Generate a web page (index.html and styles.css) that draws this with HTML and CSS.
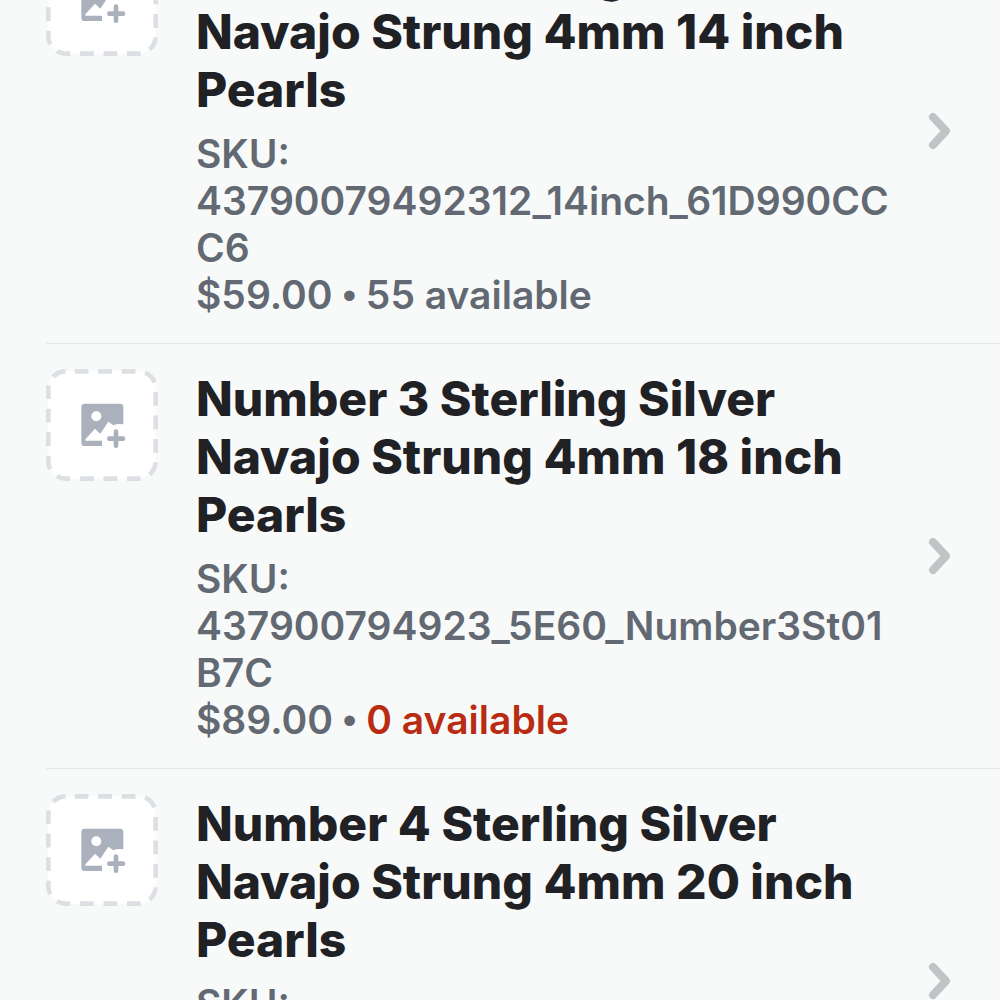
FILE: index.html
```html
<!DOCTYPE html>
<html lang="en">
<head>
  <meta charset="UTF-8">
  <meta name="viewport" content="width=device-width, initial-scale=1.0">
  <title>Variants</title>
  <link rel="stylesheet" href="styles.css">
</head>
<body>

  <!-- shared icons -->
  <svg class="sprite" aria-hidden="true">
    <symbol id="add-image" viewBox="0 0 336 336">
      <rect x="7" y="7" width="322" height="322" rx="52" fill="#fff" stroke="#dcdfe4" stroke-width="14" pathLength="1190" stroke-dasharray="41 29" stroke-dashoffset="-27"/>
      <path fill="#aab1bd" d="M116 104H222Q232 104 232 114V166Q214 163 202 169L187 158L163 194L147 179L118 211V215H168V231H116Q106 231 106 221V114Q106 104 116 104Z"/>
      <circle cx="151" cy="142" r="15" fill="#fff"/>
      <path fill="none" stroke="#aab1bd" stroke-width="14" stroke-linecap="round" d="M190 209H231M210 188V230"/>
    </symbol>
    <symbol id="chevron" viewBox="0 0 24 38">
      <path fill="none" stroke="#c1c3c7" stroke-width="8" stroke-linecap="round" stroke-linejoin="round" d="M5 5L18 19L5 33"/>
    </symbol>
  </svg>

  <main>
    <ul class="variants">
      <li>
        <a class="variant" href="#">
          <svg class="thumb" role="img" aria-label="Add image"><use href="#add-image"/></svg>
          <div class="info">
            <h2>Number 2 Sterling Silver Navajo Strung 4mm 14 inch Pearls</h2>
            <p>SKU: 43790079492312_14inch_61D990CCC6</p>
            <p>$59.00 <span class="dot">•</span> 55 available</p>
          </div>
          <svg class="chevron" aria-hidden="true"><use href="#chevron"/></svg>
        </a>
      </li>
      <li>
        <a class="variant" href="#">
          <svg class="thumb" role="img" aria-label="Add image"><use href="#add-image"/></svg>
          <div class="info">
            <h2>Number 3 Sterling Silver Navajo Strung 4mm 18 inch Pearls</h2>
            <p>SKU: 437900794923_5E60_Number3St01B7C</p>
            <p>$89.00 <span class="dot">•</span> <span class="sold-out">0 available</span></p>
          </div>
          <svg class="chevron" aria-hidden="true"><use href="#chevron"/></svg>
        </a>
      </li>
      <li>
        <a class="variant" href="#">
          <svg class="thumb" role="img" aria-label="Add image"><use href="#add-image"/></svg>
          <div class="info">
            <h2>Number 4 Sterling Silver Navajo Strung 4mm 20 inch Pearls</h2>
            <p>SKU:</p>
          </div>
          <svg class="chevron" aria-hidden="true"><use href="#chevron"/></svg>
        </a>
      </li>
    </ul>
  </main>

</body>
</html>
```

FILE: styles.css
```css
:root {
  --background: #f8faf9;
  --title: #1f2125;
  --text: #626973;
  --line: #e5e7eb;
  --critical: #b92b13;
}

* {
  margin: 0;
  padding: 0;
  box-sizing: border-box;
}

body {
  font-family: Inter, "Liberation Sans", sans-serif;
  background-color: var(--background);
  color: var(--text);
}

.sprite {
  position: absolute;
  width: 0;
  height: 0;
}

main {
  height: 100vh;
  overflow: hidden;
}

/* list is scrolled part of the way through the first variant */
.variants {
  list-style: none;
  margin-top: -81px;
  padding-left: 46px;
}

.variant {
  display: flex;
  align-items: flex-start;
  min-height: 425px;
  padding: 25px 48px 25px 0;
  border-bottom: 1px solid var(--line);
  color: inherit;
  text-decoration: none;
}

.thumb {
  flex: none;
  width: 112px;
  height: 112px;
  margin-right: 38px;
}

.info {
  flex: 1;
  min-width: 0;
  padding-top: 1px;
  font-size: 39px;
  font-weight: 600;
  line-height: 47px;
  overflow-wrap: anywhere;
}

.info h2 {
  margin-bottom: 11px;
  padding-right: 40px;
  font-size: 48px;
  font-weight: 800;
  line-height: 58px;
  color: var(--title);
}

.dot {
  font-family: "Liberation Sans", sans-serif;
  font-weight: 400;
  line-height: 1;
}

.sold-out {
  color: var(--critical);
}

.chevron {
  flex: none;
  align-self: center;
  width: 24px;
  height: 38px;
  margin-left: 24px;
}
```
